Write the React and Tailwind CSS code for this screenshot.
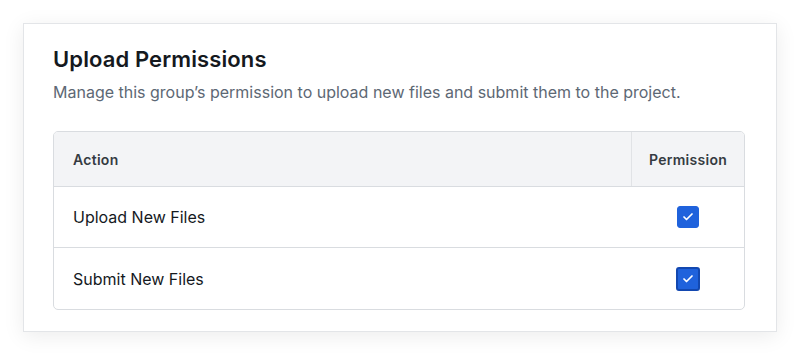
import { Check } from "lucide-react";

const rows = [
  { label: "Upload New Files", focused: false },
  { label: "Submit New Files", focused: true },
];

const Box = ({ focused }) => (
  <span
    className={`rounded-[3px] flex items-center justify-center bg-[#1f62dc] ${
      focused
        ? "w-[24px] h-[24px] border-2 border-[#1348b0]"
        : "w-[22px] h-[22px] border border-[#1f62dc]"
    }`}
  >
    <Check size={12} strokeWidth={3.5} className="text-white" />
  </span>
);

export default function App() {
  return (
    <div
      className="w-[800px] h-[355px] bg-white pt-[23px] px-[23px]"
      style={{ fontFamily: "Inter, 'Noto Sans', sans-serif" }}
    >
      <div className="w-[754px] h-[309px] bg-white border border-[#e3e5e8] shadow-[0_4px_20px_rgba(0,0,0,0.08)] px-[29px] pt-[20px]">
        <h2 className="text-[22px] leading-[30px] font-semibold tracking-[0.005em] text-[#15191e]">
          Upload Permissions
        </h2>
        <p className="mt-[6px] text-[16px] leading-[24px] text-[#5d6874]">
          Manage this group’s permission to upload new files and submit them to the project.
        </p>
        <div className="mt-[27px] w-[692px] border border-[#d9dce0] rounded-[5px] overflow-hidden">
          <div className="flex h-[55px] bg-[#f3f4f6] border-b border-[#d9dce0]">
            <div className="flex-1 flex items-center pl-[19px] text-[14px] font-semibold tracking-[0.02em] text-[#353b42]">
              Action
            </div>
            <div className="w-[113px] flex items-center justify-center border-l border-[#e1e3e6] text-[14px] font-semibold tracking-[0.02em] text-[#353b42]">
              Permission
            </div>
          </div>
          {rows.map((r, i) => (
            <div
              key={r.label}
              className={`flex h-[61px] ${i === 0 ? "border-b border-[#d9dce0]" : ""}`}
            >
              <div className="flex-1 flex items-center pl-[19px] text-[16px] text-[#15191e]">
                {r.label}
              </div>
              <div className="w-[113px] flex items-center justify-center">
                <Box focused={r.focused} />
              </div>
            </div>
          ))}
        </div>
      </div>
    </div>
  );
}
